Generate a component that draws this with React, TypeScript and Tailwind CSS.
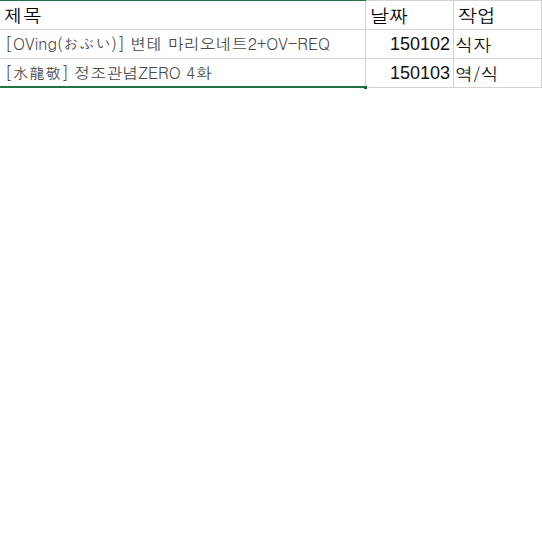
import React from 'react';

type Row = {
  title: string;
  date: string;
  work: string;
};

const rows: Row[] = [
  { title: '[OVing(おぶい)] 변테 마리오네트2+OV-REQ', date: '150102', work: '식자' },
  { title: '[水龍敬] 정조관념ZERO 4화', date: '150103', work: '역/식' },
];

const cjk = "font-['Dotum','Noto_Sans_CJK_KR',sans-serif]";

const App = (): JSX.Element => {
  return (
    <div className="w-[542px] h-[552px] bg-white overflow-hidden">
      <div className="relative w-[542px]">
        <div className="grid grid-cols-[366px_88px_88px] border-t border-[#d4d4d4]">
          <div className={`h-[29px] border-r border-b border-[#d4d4d4] pl-[4px] flex items-center text-[19px] text-black ${cjk}`}>
            제목
          </div>
          <div className={`h-[29px] border-r border-b border-[#d4d4d4] pl-[4px] flex items-center text-[19px] text-black ${cjk}`}>
            날짜
          </div>
          <div className={`h-[29px] border-r border-b border-[#d4d4d4] pl-[4px] flex items-center text-[19px] text-black ${cjk}`}>
            작업
          </div>

          {rows.map((row) => (
            <React.Fragment key={row.date}>
              <div className={`h-[29px] border-r border-b border-[#d4d4d4] pl-[5px] flex items-center text-[16px] text-[#4a4a4a] whitespace-nowrap ${cjk}`}>
                {row.title}
              </div>
              <div className="h-[29px] border-r border-b border-[#d4d4d4] pr-[3px] flex items-center justify-end text-[18px] text-[#111111] font-['Liberation_Sans',sans-serif]">
                {row.date}
              </div>
              <div className={`h-[29px] border-r border-b border-[#d4d4d4] pl-[1px] flex items-center text-[18px] text-[#111111] ${cjk}`}>
                {row.work}
              </div>
            </React.Fragment>
          ))}
        </div>

        {/* selection edges */}
        <div className="absolute left-0 top-0 w-[366px] h-px bg-[#217346]" />
        <div className="absolute left-0 top-[86px] w-[366px] h-[2px] bg-[#217346]" />
        <div className="absolute left-[364px] top-[86px] w-[3px] h-[3px] bg-[#1e5e3a]" />
      </div>
    </div>
  );
};

export default App;
